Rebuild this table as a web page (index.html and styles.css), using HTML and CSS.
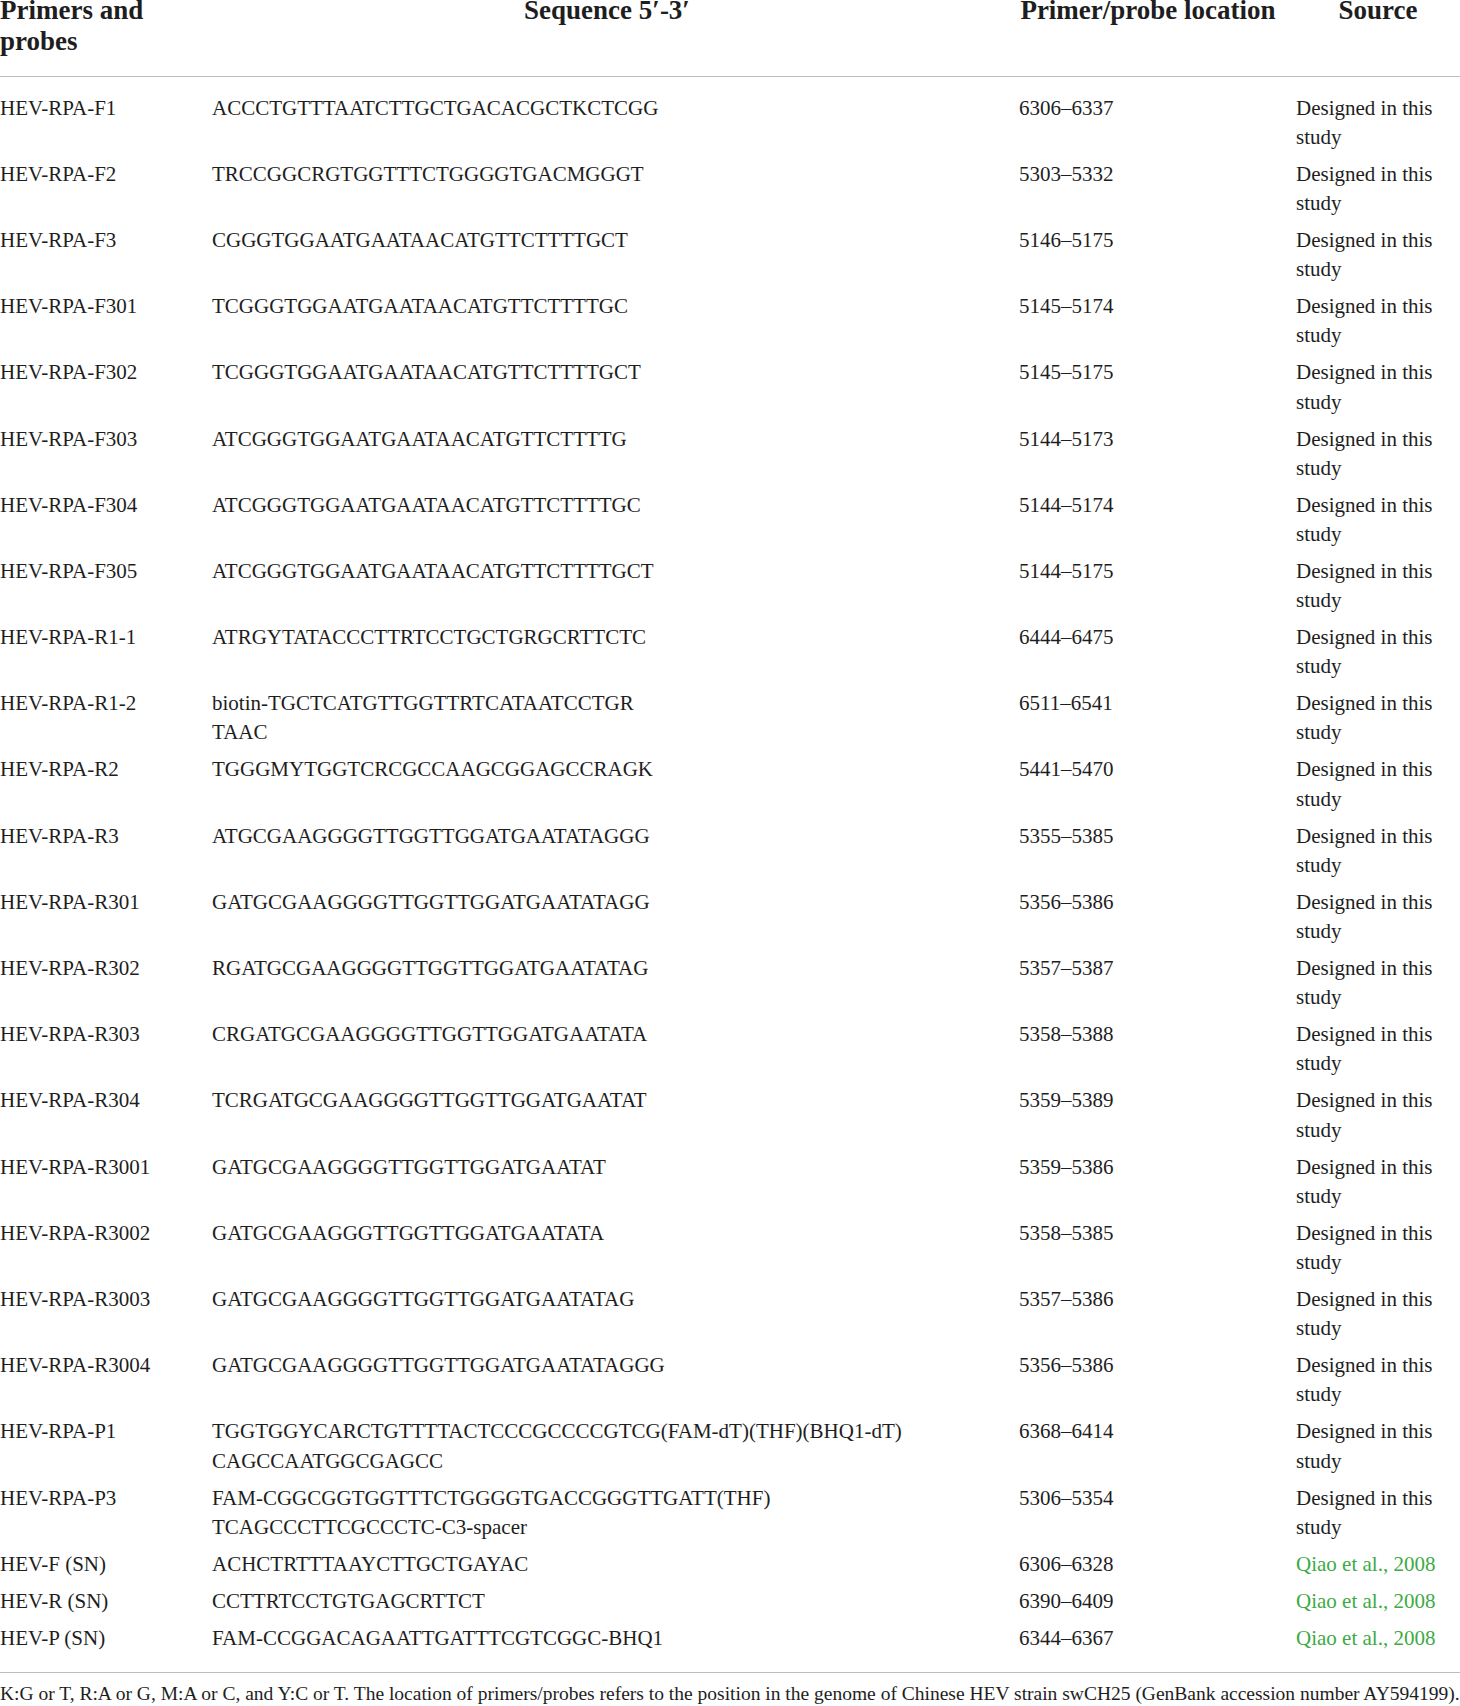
FILE: index.html
```html
<!DOCTYPE html>
<html lang="en">
<head>
<meta charset="utf-8">
<title>Primers and probes</title>
<link rel="stylesheet" href="styles.css">
</head>
<body>
<table class="primers">
  <colgroup>
    <col class="c-name">
    <col class="c-seq">
    <col class="c-loc">
    <col class="c-src">
  </colgroup>
  <thead>
    <tr>
      <th class="h-name">Primers and probes</th>
      <th class="h-center">Sequence 5′-3′</th>
      <th class="h-center">Primer/probe location</th>
      <th class="h-center">Source</th>
    </tr>
  </thead>
  <tbody>
    <tr><td>HEV-RPA-F1</td><td>ACCCTGTTTAATCTTGCTGACACGCTKCTCGG</td><td>6306–6337</td><td>Designed in this study</td></tr>
    <tr><td>HEV-RPA-F2</td><td>TRCCGGCRGTGGTTTCTGGGGTGACMGGGT</td><td>5303–5332</td><td>Designed in this study</td></tr>
    <tr><td>HEV-RPA-F3</td><td>CGGGTGGAATGAATAACATGTTCTTTTGCT</td><td>5146–5175</td><td>Designed in this study</td></tr>
    <tr><td>HEV-RPA-F301</td><td>TCGGGTGGAATGAATAACATGTTCTTTTGC</td><td>5145–5174</td><td>Designed in this study</td></tr>
    <tr><td>HEV-RPA-F302</td><td>TCGGGTGGAATGAATAACATGTTCTTTTGCT</td><td>5145–5175</td><td>Designed in this study</td></tr>
    <tr><td>HEV-RPA-F303</td><td>ATCGGGTGGAATGAATAACATGTTCTTTTG</td><td>5144–5173</td><td>Designed in this study</td></tr>
    <tr><td>HEV-RPA-F304</td><td>ATCGGGTGGAATGAATAACATGTTCTTTTGC</td><td>5144–5174</td><td>Designed in this study</td></tr>
    <tr><td>HEV-RPA-F305</td><td>ATCGGGTGGAATGAATAACATGTTCTTTTGCT</td><td>5144–5175</td><td>Designed in this study</td></tr>
    <tr><td>HEV-RPA-R1-1</td><td>ATRGYTATACCCTTRTCCTGCTGRGCRTTCTC</td><td>6444–6475</td><td>Designed in this study</td></tr>
    <tr><td>HEV-RPA-R1-2</td><td>biotin-TGCTCATGTTGGTTRTCATAATCCTGR<br>TAAC</td><td>6511–6541</td><td>Designed in this study</td></tr>
    <tr><td>HEV-RPA-R2</td><td>TGGGMYTGGTCRCGCCAAGCGGAGCCRAGK</td><td>5441–5470</td><td>Designed in this study</td></tr>
    <tr><td>HEV-RPA-R3</td><td>ATGCGAAGGGGTTGGTTGGATGAATATAGGG</td><td>5355–5385</td><td>Designed in this study</td></tr>
    <tr><td>HEV-RPA-R301</td><td>GATGCGAAGGGGTTGGTTGGATGAATATAGG</td><td>5356–5386</td><td>Designed in this study</td></tr>
    <tr><td>HEV-RPA-R302</td><td>RGATGCGAAGGGGTTGGTTGGATGAATATAG</td><td>5357–5387</td><td>Designed in this study</td></tr>
    <tr><td>HEV-RPA-R303</td><td>CRGATGCGAAGGGGTTGGTTGGATGAATATA</td><td>5358–5388</td><td>Designed in this study</td></tr>
    <tr><td>HEV-RPA-R304</td><td>TCRGATGCGAAGGGGTTGGTTGGATGAATAT</td><td>5359–5389</td><td>Designed in this study</td></tr>
    <tr><td>HEV-RPA-R3001</td><td>GATGCGAAGGGGTTGGTTGGATGAATAT</td><td>5359–5386</td><td>Designed in this study</td></tr>
    <tr><td>HEV-RPA-R3002</td><td>GATGCGAAGGGTTGGTTGGATGAATATA</td><td>5358–5385</td><td>Designed in this study</td></tr>
    <tr><td>HEV-RPA-R3003</td><td>GATGCGAAGGGGTTGGTTGGATGAATATAG</td><td>5357–5386</td><td>Designed in this study</td></tr>
    <tr><td>HEV-RPA-R3004</td><td>GATGCGAAGGGGTTGGTTGGATGAATATAGGG</td><td>5356–5386</td><td>Designed in this study</td></tr>
    <tr><td>HEV-RPA-P1</td><td>TGGTGGYCARCTGTTTTACTCCCGCCCCGTCG(FAM-dT)(THF)(BHQ1-dT)<br>CAGCCAATGGCGAGCC</td><td>6368–6414</td><td>Designed in this study</td></tr>
    <tr><td>HEV-RPA-P3</td><td>FAM-CGGCGGTGGTTTCTGGGGTGACCGGGTTGATT(THF)<br>TCAGCCCTTCGCCCTC-C3-spacer</td><td>5306–5354</td><td>Designed in this study</td></tr>
    <tr><td>HEV-F (SN)</td><td>ACHCTRTTTAAYCTTGCTGAYAC</td><td>6306–6328</td><td><a class="ref" href="#">Qiao et al., 2008</a></td></tr>
    <tr><td>HEV-R (SN)</td><td>CCTTRTCCTGTGAGCRTTCT</td><td>6390–6409</td><td><a class="ref" href="#">Qiao et al., 2008</a></td></tr>
    <tr><td>HEV-P (SN)</td><td>FAM-CCGGACAGAATTGATTTCGTCGGC-BHQ1</td><td>6344–6367</td><td><a class="ref" href="#">Qiao et al., 2008</a></td></tr>
  </tbody>
</table>
<p class="footnote">K:G or T, R:A or G, M:A or C, and Y:C or T. The location of primers/probes refers to the position in the genome of Chinese HEV strain swCH25 (GenBank accession number AY594199).</p>
</body>
</html>
```

FILE: styles.css
```css
html, body {
  margin: 0;
  padding: 0;
  background: #ffffff;
}

body {
  width: 1460px;
  overflow: hidden;
  font-family: "Liberation Serif", "Times New Roman", serif;
  color: #1e1e1e;
}

.primers {
  width: 1460px;
  table-layout: fixed;
  border-collapse: separate;
  border-spacing: 0;
  margin-top: -5px;
}

.c-name { width: 212px; }
.c-seq { width: 807px; }
.c-loc { width: 277px; }
.c-src { width: 164px; }

.primers th {
  font-size: 27px;
  font-weight: bold;
  line-height: 31px;
  vertical-align: top;
  padding: 0 17px 19px 0;
  border-bottom: 1px solid #bcbcbc;
}

.primers th.h-name { text-align: left; }
.primers th.h-center { text-align: center; }
.primers th:nth-child(3) { padding-right: 19px; }
.primers th:last-child { padding-right: 0; }

.primers td {
  font-size: 21px;
  line-height: 29.2px;
  vertical-align: top;
  text-align: left;
  padding: 3.9px 17px 3.9px 0;
}

.primers td:last-child { padding-right: 0; }

.primers tbody tr:first-child td { padding-top: 16.6px; }

.primers tbody tr:last-child td {
  padding-bottom: 19.2px;
  border-bottom: 1px solid #bcbcbc;
}

.ref {
  color: #3daa44;
  text-decoration: none;
}

.footnote {
  margin: 0;
  padding-top: 9px;
  font-size: 19.5px;
  line-height: 24px;
  white-space: nowrap;
}
```
